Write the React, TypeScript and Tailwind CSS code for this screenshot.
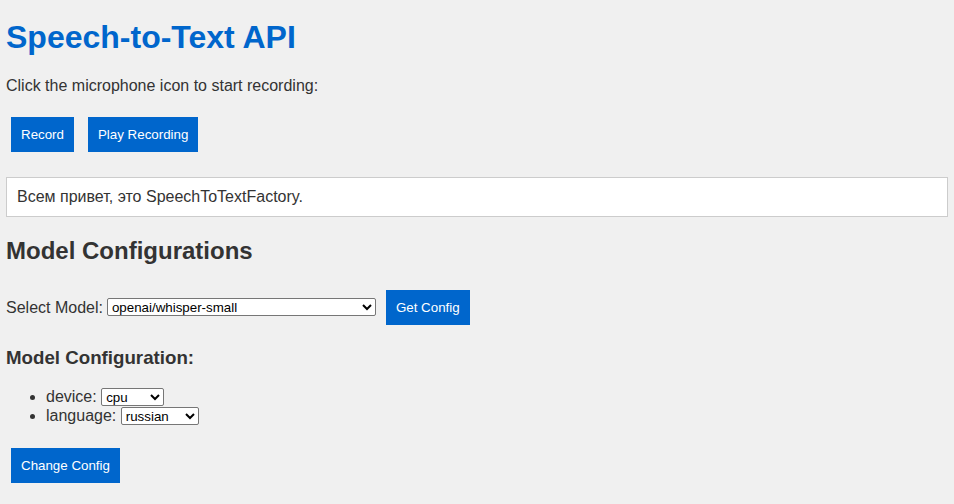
import { useState } from 'react'

const font = { fontFamily: '"Liberation Sans", Arial, sans-serif' }

function Button({ children }: { children: React.ReactNode }) {
    return (
        <button className="h-[35px] bg-[#0066cc] px-[10px] text-[13.33px] leading-[15px] text-white cursor-pointer hover:bg-[#0052a3]">
            {children}
        </button>
    )
}

export default function App() {
    const [model, setModel] = useState('openai/whisper-small')
    const [device, setDevice] = useState('cpu')
    const [language, setLanguage] = useState('russian')

    return (
        <div className="min-h-screen bg-[#f0f0f0] px-[6px] pb-4 text-[16px] text-[#333]" style={font}>
            <h1 className="pt-[19px] text-[32px] font-bold leading-[normal] text-[#0066cc]">Speech-to-Text API</h1>
            <p className="mt-[21px] leading-[normal]">Click the microphone icon to start recording:</p>

            <div className="mt-[22px] flex gap-[14px] pl-[5px]">
                <Button>Record</Button>
                <Button>Play Recording</Button>
            </div>

            <div className="mt-[25px] border border-[#ccc] bg-white p-[10px] leading-[normal]">
                Всем привет, это SpeechToTextFactory.
            </div>

            <h2 className="mt-[20px] text-[24px] font-bold leading-[normal]">Model Configurations</h2>

            <div className="mt-[25px] flex items-center">
                <label className="mr-[4px] leading-[normal]">Select Model:</label>
                <select
                    value={model}
                    onChange={(e) => setModel(e.target.value)}
                    className="mb-[1px] h-[18px] w-[269px] rounded-[2px] border border-[#767676] bg-white text-[13.33px] leading-[normal] text-black"
                >
                    <option>openai/whisper-small</option>
                    <option>openai/whisper-medium</option>
                    <option>openai/whisper-large-v3</option>
                </select>
                <span className="ml-[10px]">
                    <Button>Get Config</Button>
                </span>
            </div>

            <h3 className="mt-[22px] text-[18.72px] font-bold leading-[normal]">Model Configuration:</h3>

            <ul className="mt-[18px] list-disc pl-[40px] leading-[19px]">
                <li>
                    device:{' '}
                    <select
                        value={device}
                        onChange={(e) => setDevice(e.target.value)}
                        className="h-[18px] w-[63px] rounded-[2px] border border-[#767676] bg-white text-[13.33px] text-black"
                    >
                        <option>cpu</option>
                        <option>cuda</option>
                    </select>
                </li>
                <li>
                    language:{' '}
                    <select
                        value={language}
                        onChange={(e) => setLanguage(e.target.value)}
                        className="h-[18px] w-[78px] rounded-[2px] border border-[#767676] bg-white text-[13.33px] text-black"
                    >
                        <option>russian</option>
                        <option>english</option>
                    </select>
                </li>
            </ul>

            <div className="mt-[23px] pl-[5px]">
                <Button>Change Config</Button>
            </div>
        </div>
    )
}
